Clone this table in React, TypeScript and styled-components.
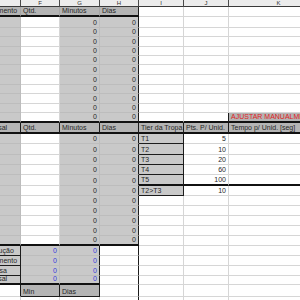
import React from "react";
import styled, { createGlobalStyle } from "styled-components";

const GlobalStyle = createGlobalStyle`
  html, body {
    margin: 0;
    padding: 0;
    background: #fff;
    overflow: hidden;
  }
  body {
    font-family: "Liberation Sans", Arial, sans-serif;
  }
`;

type Fill = "white" | "gray" | "head";
type Align = "left" | "right";
type Ink = "ink" | "blue" | "red";
// 0 = light gridline, 1 = dark rule, 2 = thick dark rule
type Line = 0 | 1 | 2;

type CellSpec = {
  text?: string;
  fill?: Fill;
  align?: Align;
  ink?: Ink;
  r?: Line;
  b?: Line;
};

const COLS = [45, 39, 40, 39, 45, 45, 100];
const LETTERS = ["E", "F", "G", "H", "I", "J", "K"];

const FILLS: Record<Fill, string> = {
  white: "#ffffff",
  gray: "#c9c9c9",
  head: "#b4b4b4",
};

const GRID: Record<Fill, string> = {
  white: "#d6d6d6",
  gray: "#bdbdbd",
  head: "#a6a6a6",
};

const INKS: Record<Ink, string> = {
  ink: "#272727",
  blue: "#3a3adc",
  red: "#e02222",
};

const rule = (l: Line, fill: Fill) =>
  l === 2 ? "2px solid #111" : l === 1 ? "1px solid #1c1c1c" : `1px solid ${GRID[fill]}`;

const Viewport = styled.div`
  width: 300px;
  height: 300px;
  overflow: hidden;
`;

// sheet is scrolled so that column E is only partly in view
const Sheet = styled.div<{ $rows: number[] }>`
  display: grid;
  grid-template-columns: ${COLS.map((w) => `${w}px`).join(" ")};
  grid-template-rows: ${(p) => p.$rows.map((h) => `${h}px`).join(" ")};
  margin-left: -24px;
  width: max-content;
`;

const ColumnHead = styled.div`
  box-sizing: border-box;
  display: flex;
  align-items: center;
  justify-content: center;
  background: #ececec;
  border-right: 1px solid #4a4a4a;
  border-bottom: 1px solid #3a3a3a;
  font-size: 6px;
  line-height: 6px;
  color: #333;
`;

const Cell = styled.div<{ $fill: Fill; $align: Align; $ink: Ink; $r: Line; $b: Line }>`
  box-sizing: border-box;
  display: flex;
  align-items: flex-end;
  justify-content: ${(p) => (p.$align === "right" ? "flex-end" : "flex-start")};
  overflow: hidden;
  white-space: nowrap;
  padding: 0 2px;
  font-size: 7px;
  line-height: 8px;
  background: ${(p) => FILLS[p.$fill]};
  color: ${(p) => INKS[p.$ink]};
  border-right: ${(p) => rule(p.$r, p.$fill)};
  border-bottom: ${(p) => rule(p.$b, p.$fill)};
`;

const topHeights = [11, 9, 10, 9, 9, 10, 10, 9, 10, 9, 10];
const midHeights = [10, 11, 10, 10, 11, 10, 10, 10, 10, 10, 10];
const sumHeights = [10, 10, 10, 9];
const rowHeights = [7, 10, ...topHeights, 11, ...midHeights, ...sumHeights, 12, 10];

const tiers: [string, string][] = [
  ["T1", "5"],
  ["T2", "10"],
  ["T3", "20"],
  ["T4", "60"],
  ["T5", "100"],
  ["T2>T3", "10"],
];

const summary = ["Construção", "Treinamento", "Pesquisa", "Universal"];

const header1: CellSpec[] = [
  { text: "Treinamento", fill: "head", b: 2 },
  { text: "Qtd.", fill: "head", b: 2 },
  { text: "Minutos", fill: "head", b: 2 },
  { text: "Dias", fill: "head", b: 2, r: 1 },
  {},
  {},
  {},
];

const topRows: CellSpec[][] = topHeights.map((_, i) => {
  const b: Line = i === topHeights.length - 1 ? 2 : 0;
  const last = b === 2;
  return [
    { fill: "gray", b },
    { b },
    { text: "0", fill: "gray", align: "right", b },
    { text: "0", fill: "gray", align: "right", r: 1, b },
    { b },
    { b, r: last ? 1 : 0 },
    last ? { text: "AJUSTAR MANUALMENTE", fill: "head", ink: "red", b } : { b },
  ];
});

const header2: CellSpec[] = [
  "Universal",
  "Qtd.",
  "Minutos",
  "Dias",
  "Tier da Tropa",
  "Pts. P/ Unid.",
  "Tempo p/ Unid. [seg]",
].map((text) => ({ text, fill: "head", r: 1, b: 2 }));

const midRows: CellSpec[][] = midHeights.map((_, i) => {
  const b: Line = i === midHeights.length - 1 ? 2 : 0;
  const tier = tiers[i];
  const tb: Line = i === 4 ? 2 : 0;
  return [
    { fill: "gray", b },
    { b },
    { text: "0", fill: "gray", align: "right", b },
    { text: "0", fill: "gray", align: "right", r: 1, b },
    tier ? { text: tier[0], fill: "gray", r: 1, b: tb || 1 } : {},
    tier ? { text: tier[1], align: "right", b: tb } : {},
    { b: tb },
  ];
});

const sumRows: CellSpec[][] = summary.map((label, i) => {
  const b: Line = i === summary.length - 1 ? 2 : 0;
  return [
    { text: label, fill: "gray", r: 1, b: b || 1 },
    { text: "0", fill: "gray", align: "right", ink: "blue", b },
    { text: "0", fill: "gray", align: "right", ink: "blue", r: 1, b },
    { r: 1 },
    {},
    {},
    {},
  ];
});

const unitRow: CellSpec[] = [
  { r: 1 },
  { text: "Min", fill: "head", r: 1, b: 1 },
  { text: "Dias", fill: "head", r: 1, b: 1 },
  { r: 1 },
  {},
  {},
  {},
];

const blankRow: CellSpec[] = [{}, {}, {}, { r: 1 }, {}, {}, {}];

const rows: CellSpec[][] = [header1, ...topRows, header2, ...midRows, ...sumRows, unitRow, blankRow];

export default function App() {
  return (
    <>
      <GlobalStyle />
      <Viewport>
        <Sheet $rows={rowHeights}>
          {LETTERS.map((l) => (
            <ColumnHead key={l}>{l}</ColumnHead>
          ))}
          {rows.map((row, ri) =>
            row.map((c, ci) => (
              <Cell
                key={`${ri}-${ci}`}
                $fill={c.fill ?? "white"}
                $align={c.align ?? "left"}
                $ink={c.ink ?? "ink"}
                $r={c.r ?? 0}
                $b={c.b ?? 0}
              >
                {c.text}
              </Cell>
            ))
          )}
        </Sheet>
      </Viewport>
    </>
  );
}
